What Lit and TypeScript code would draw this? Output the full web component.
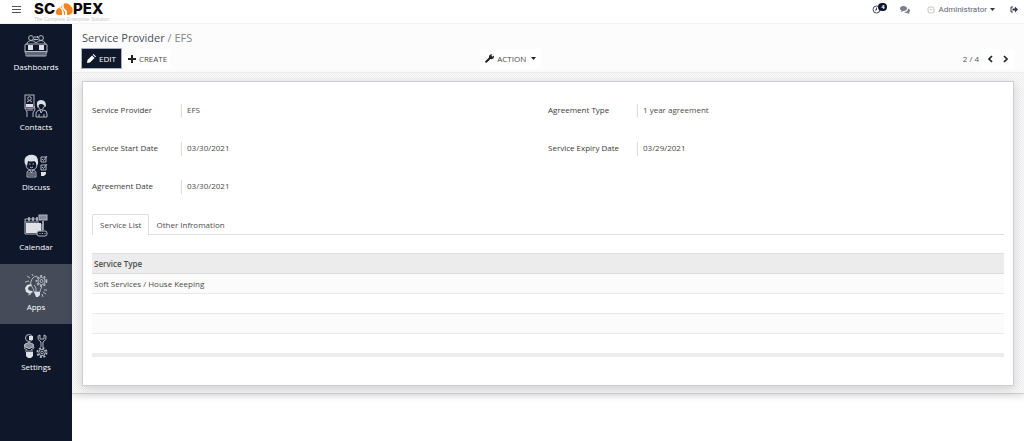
import { LitElement, html, css, svg, nothing } from "lit";
import { customElement, property, state } from "lit/decorators.js";
import { classMap } from "lit/directives/class-map.js";

const gear = (cx: number, cy: number, r: number) => svg`
  <circle cx=${cx} cy=${cy} r=${r} />
  <circle cx=${cx} cy=${cy} r=${r + 1.4} stroke-dasharray="2 1.6" stroke-width="1.8" />
  <circle cx=${cx} cy=${cy} r=${r / 2.4} />`;

const menuIcons: Record<string, unknown> = {
  dashboards: svg`
    <circle cx="7" cy="4" r="2.4" /><circle cx="17" cy="4" r="2.4" />
    <path d="M10 3h4M13 2l1 1-1 1M14 5.500h-4M11 4.500l-1 1 1 1M3 11V9q1-2 4-2.500 3 0 5 2.500 2-2.500 5-2.500t4 2.500v2" />
    <rect x="1" y="10" width="22" height="9" rx="1" />
    <path class="solid" d="M4 11h5v5H4zM15 11h5v5h-5z" />
    <path d="M1 17.500h22M2 19v3h20v-3M3 21h18" />`,
  contacts: svg`
    <rect x="1" y="1" width="9" height="13" /><circle cx="5.500" cy="4.500" r="1.800" />
    <path d="M3 8q2.500-3 5 0" />
    <path class="solid" d="M2 10h7v3H2z" />
    <path d="M1 14l2 4v5M10 12l1 3-2 4v4M4 14v3M6 14v3M8 14v3" />
    <path class="solid" d="M13 12q-1-6 4-6t5 6l-1 1q-1-3-4-3t-3 4z" />
    <path d="M14 11q1 5 3 5t4-5M12 23v-4q1-3 4-3l1 3 2-3q4 0 4 4v3zM15 20v3M20 20v3" />`,
  discuss: svg`
    <path class="solid" d="M1 10Q-1 3 5 1q10-2 9 9l-2 2q1-4-2-5-3 1-6 0l-1 5z" />
    <path d="M2 10q0 6 5.500 6t5.500-6M5 10h1.500M8.500 10H10M6 13q1.500 1.500 3 0M3 23v-3q-1-3 3-4l1.500 3L9 16q4 1 3 4v3zM4 19h7M4 21h7" />
    <path d="M17 3h5v5h-5zM17 11h5v5h-5zM18 5l1.500 1.500L23 2M18 13l1.500 1.500L23 10" />
    <path class="solid" d="M17 18h5v2l-2 2h-3z" />`,
  calendar: svg`
    <path d="M1 20V5h13M18 10v10H1M1 8h14" />
    <path class="solid" d="M2 9h15v10H2z" />
    <path d="M5 3v4M9 3v4M13 3v4M19 7v9" stroke-width="1.600" />
    <rect x="15" y="1" width="8" height="5" class="soft" />
    <rect x="13" y="17" width="10" height="5" rx="2" class="ground" />
    <path d="M15.500 19.500h1M18 19.500h1M20.500 19.500h1" />`,
  apps: svg`
    <path class="solid" d="M7 10l-4 1-2 3 1 4 4 2 3-2-1-1q-4 0-4-3 1-2 3-2z" />
    <path d="M10 18q0-3-2-5-3-4 0-8 2-3 5-3M10 18h6q0-3 2-5M10 11l2 3v4M5 7L1 8M6 4L3 2M9 2L8 0M19 18l3 2M18 20l1 3M4 21l3-1M20 16h3" />
    ${gear(17.5, 7, 3.600)}
    <path class="solid" d="M10 18h6v3l-2 2h-2z" />`,
  settings: svg`
    <circle cx="5" cy="4" r="3.500" /><path class="solid" d="M5 2h4v4H5z" />
    <path class="soft" d="M1 10q4-3 8 0v3q-4 3-8 0z" />
    <path d="M1 10l-1 4 3 2M9 10l1 4-3 2M1 17h8" />
    <path class="solid" d="M2 18h7v4l-2 2H4l-2-2z" />
    <path d="M17 13V8q-4-2-3-6l2-1v4h4V1l2 1q1 4-3 6v5" />
    ${gear(18, 18.5, 3.200)}`,
};

const menu = ["Dashboards", "Contacts", "Discuss", "Calendar", "Apps", "Settings"];

@customElement("side-menu")
class SideMenu extends LitElement {
  @property() active = "Apps";

  static styles = css`
    :host { display: block; background: #0f172b; flex: none; width: 72px; }
    .item {
      display: flex; flex-direction: column; align-items: center; gap: 3px;
      box-sizing: border-box; height: 60px; padding-top: 10px;
      color: #fff; text-decoration: none; font-size: 8px; line-height: 12px; font-weight: 500;
    }
    .item.active { background: #454b59; }
    .icon { width: 24px; height: 24px; fill: none; stroke: #b4b8c1; stroke-width: 1; }
    .solid { fill: #dfe1e6; stroke: none; }
    .soft { fill: #858a96; }
    .ground { fill: #0f172b; }
  `;

  render() {
    return html`<nav aria-label="Applications">
      ${menu.map((name) => html`
        <a href="#${name.toLowerCase()}" class=${classMap({ item: true, active: name === this.active })}>
          <svg class="icon" viewBox="0 0 24 24" aria-hidden="true">${menuIcons[name.toLowerCase()]}</svg>
          <span>${name}</span>
        </a>`)}
    </nav>`;
  }
}

@customElement("top-bar")
class TopBar extends LitElement {
  static styles = css`
    :host {
      display: flex; align-items: center; justify-content: space-between;
      box-sizing: border-box; height: 24px; padding: 0 6px 0 8px; background: #fff;
      border-bottom: 1px solid #f3f3f3;
    }
    .left, .right { display: flex; align-items: center; }
    .left { gap: 9px; }
    .right { gap: 11px; height: 19px; align-self: flex-start; }
    button {
      display: flex; align-items: center; padding: 0; border: 0; background: none;
      color: #6c7280; font: inherit; cursor: pointer;
    }
    .burger { width: 17px; height: 16px; justify-content: center; align-self: flex-start; margin-top: 1px; }
    .brand { display: block; text-decoration: none; align-self: flex-start; }
    .word { display: flex; align-items: center; height: 15px; color: #080808; font: 800 15px/15px "Inter", sans-serif; }
    .tag { display: block; color: #c9c9c9; font: 5px/6px "Liberation Sans", sans-serif; white-space: nowrap; }
    .activity { position: relative; }
    .count {
      position: absolute; left: 6px; top: -2px; width: 9px; height: 8px; border-radius: 4px;
      background: #0f172b; color: #fff; font: 700 6px/8px "Roboto", sans-serif; text-align: center;
    }
    .chat { margin-left: 8px; }
    .user { gap: 3px; margin: 0 4px 0 6px; font: 8px/12px "Roboto", sans-serif; color: #5d6472; }
  `;

  render() {
    return html`
      <div class="left">
        <button class="burger" aria-label="Toggle menu">
          <svg width="9" height="8" viewBox="0 0 9 8" stroke="#555" stroke-width="1"><path d="M0 .5h9M0 3.500h9M0 6.500h9" /></svg>
        </button>
        <a class="brand" href="#home">
          <span class="word">SC<svg width="18" height="12" viewBox="0 0 18 12" aria-label="O">
            <path fill="#f58220" d="M8 1q4-2 7 1 4 4 2 8-1 2-4 2H3Q0 11 1 8q1-3 5-4z" />
            <path fill="#fff" d="M8 1q-2 3 0 5l2 3 0 3h2V8L9 5Q8 3 9 1zM5 5q3 3 2 7h2Q9 7 6 4z" />
          </svg>PEX</span>
          <span class="tag">The Complete Enterprise Solution</span>
        </a>
      </div>
      <div class="right">
        <button class="activity" aria-label="Activities">
          <svg width="9" height="9" viewBox="0 0 9 9" fill="none" stroke="#444b5a" stroke-width="1"><circle cx="4.500" cy="4.500" r="3.500" /><path d="M4.500 2.500v2.500H3" /></svg>
          <span class="count">4</span>
        </button>
        <button class="chat" aria-label="Messages">
          <svg width="10" height="8" viewBox="0 0 10 8" fill="#7b808c"><path d="M3.500 0C5.500 0 7 1 7 2.500S5.500 5 3.500 5L1 6l.5-1.500Q0 4 0 2.500 0 0 3.500 0z" /><path d="M8 2.500q2 .5 2 2Q10 6 9 6.500L9.500 8 7 7Q5 7 4 6q4 0 4-3.500z" /></svg>
        </button>
        <button class="user">
          <svg width="8" height="8" viewBox="0 0 8 8" fill="none" stroke="#c6c6c6" stroke-width="1"><path d="M1 2l2-1h3l1 2v3L5 7H2L1 5z" /><path d="M3 4l1-1 1 1" /></svg>
          <span>Administrator</span>
          <svg width="5" height="3" viewBox="0 0 5 3"><path fill="#30384a" d="M0 0h5L2.500 3z" /></svg>
        </button>
        <button aria-label="Log out">
          <svg width="8" height="7" viewBox="0 0 8 7"><path d="M3 1H1v5h2" fill="none" stroke="#30384a" /><path fill="#30384a" d="M2.500 2.500H5V.5l3 3-3 3v-2H2.500z" /></svg>
        </button>
      </div>`;
  }
}

@customElement("control-panel")
class ControlPanel extends LitElement {
  static styles = css`
    :host { display: block; background: #fcfcfc; border-bottom: 1px solid #f0f0f0; padding: 7px 10px 4px; }
    .crumbs { font-size: 11px; line-height: 14px; color: #82868c; }
    .crumbs a { color: #4a4f59; text-decoration: none; }
    .bar { display: grid; grid-template-columns: 16fr auto 19fr; align-items: center; margin-top: 4px; }
    .group { display: flex; align-items: center; gap: 3px; }
    .end { justify-content: flex-end; }
    .pager { display: flex; }
    button {
      display: flex; align-items: center; gap: 3px; box-sizing: border-box; height: 19px;
      padding: 0 4px; border: 0; background: #fff; color: #4b4b4b; font: 8px/12px "Open Sans", sans-serif; cursor: pointer;
    }
    .primary { background: #0f172b; color: #fff; font-weight: 500; padding: 0 5px; outline: 1px solid #aab0c4; }
    .action { padding: 0 5px; }
    .caret { margin-left: 2px; }
    .step { width: 16px; padding: 0; justify-content: center; }
    .count { font-size: 8px; line-height: 12px; color: #555; }
  `;

  render() {
    return html`
      <div class="crumbs"><a href="#providers">Service Provider</a> / EFS</div>
      <div class="bar">
        <div class="group">
          <button class="primary">
            <svg width="9" height="9" viewBox="0 0 9 9" fill="#fff"><path d="M0 9l.5-3L5 1.500 7.500 4 3 8.500zM5.700.8L6.500 0 9 2.500l-.8.8z" /></svg>EDIT
          </button>
          <button>
            <svg width="8" height="8" viewBox="0 0 8 8"><path d="M4 0v8M0 4h8" stroke="#222" stroke-width="2" /></svg>CREATE
          </button>
        </div>
        <button class="action">
          <svg width="9" height="9" viewBox="0 0 9 9"><path d="M1.200 7.800L5.500 3.500" stroke="#222" stroke-width="2" stroke-linecap="round" /><path fill="#222" d="M7.500.3L6.300 1.700l1 1L8.800 1.500Q9.500 4 7.500 5 5 5.500 4 4 3.500 0 7.500.3z" /></svg>ACTION
          <svg class="caret" width="5" height="3" viewBox="0 0 5 3"><path fill="#222" d="M0 0h5L2.500 3z" /></svg>
        </button>
        <div class="group end">
          <span class="count">2 / 4</span>
          <div class="pager">
            <button class="step" aria-label="Previous"><svg width="6" height="8" viewBox="0 0 6 8"><path d="M5 1L2 4l3 3" fill="none" stroke="#222" stroke-width="1.700" /></svg></button>
            <button class="step" aria-label="Next"><svg width="6" height="8" viewBox="0 0 6 8"><path d="M1 1l3 3-3 3" fill="none" stroke="#222" stroke-width="1.700" /></svg></button>
          </div>
        </div>
      </div>`;
  }
}

const fields: [string, string][] = [
  ["Service Provider", "EFS"],
  ["Agreement Type", "1 year agreement"],
  ["Service Start Date", "03/30/2021"],
  ["Service Expiry Date", "03/29/2021"],
  ["Agreement Date", "03/30/2021"],
];

@customElement("record-sheet")
class RecordSheet extends LitElement {
  @state() tab = 0;

  static styles = css`
    :host {
      display: block; padding: 8px 10px 7px;
      background: repeating-conic-gradient(#f0f0f0 0 25%, #f8f8f8 0 50%) 0 0 / 2px 2px;
      border-bottom: 1px solid #cfcfd0; box-shadow: 0 3px 6px #0000001f;
    }
    .sheet {
      background: #fff; border: 1px solid #cdced6; padding: 22px 9px 28px;
      box-shadow: 0 3px 10px #00000026; color: #4c4c4c; font-size: 8px; line-height: 12px;
    }
    .fields { display: grid; grid-template-columns: 1fr 1fr; row-gap: 24px; margin: 0; }
    .field { display: grid; grid-template-columns: 89px 1fr; }
    dt { font-weight: 500; color: #3a3a3a; }
    dd { margin: 0; border-left: 1px solid #dcdcdc; padding: 0 5px 2px; }
    .tabs { display: flex; margin-top: 20px; border-bottom: 1px solid #dedfe3; }
    .tab {
      border: 1px solid transparent; border-bottom: 0; margin-bottom: -1px; background: none; padding: 4px 7px;
      color: #4c4c4c; font: inherit; cursor: pointer;
    }
    .tab + .tab { padding-left: 6px; }
    .tab.on { background: #fff; border-color: #dedfe3; border-radius: 2px 2px 0 0; }
    table { width: 100%; border-collapse: collapse; margin-top: 18px; }
    th, td { box-sizing: border-box; padding: 0 2px; text-align: left; }
    th { height: 20px; background: #ececec; font-weight: 600; border-top: 1px solid #dfdfdf; border-bottom: 1px solid #d8dbe0; }
    td { height: 20px; border-bottom: 1px solid #e8e8ea; }
    tbody tr:nth-child(odd) td { background: #fbfbfb; }
    tbody tr:last-child td { height: 19px; border-bottom: 0; background: #fff; }
    tfoot td { height: 4px; background: #ececec; border: 0; }
  `;

  render() {
    return html`<section class="sheet">
      <dl class="fields">
        ${fields.map(([label, value]) => html`<div class="field"><dt>${label}</dt><dd>${value}</dd></div>`)}
      </dl>
      <div class="tabs" role="tablist">
        ${["Service List", "Other Infromation"].map((label, i) => html`
          <button role="tab" aria-selected=${i === this.tab} class=${classMap({ tab: true, on: i === this.tab })}
            @click=${() => (this.tab = i)}>${label}</button>`)}
      </div>
      ${this.tab === 0 ? html`<table>
        <thead><tr><th scope="col">Service Type</th></tr></thead>
        <tbody>
          <tr><td>Soft Services / House Keeping</td></tr>
          <tr><td></td></tr>
          <tr><td></td></tr>
          <tr><td></td></tr>
        </tbody>
        <tfoot><tr><td></td></tr></tfoot>
      </table>` : nothing}
    </section>`;
  }
}

@customElement("app-root")
class AppRoot extends LitElement {
  static styles = css`
    :host { display: flex; flex-direction: column; min-height: 100vh; background: #fff; font-family: "Open Sans", sans-serif; }
    .body { display: flex; flex: 1; }
    .main { flex: 1; min-width: 0; }
  `;

  render() {
    return html`
      <top-bar></top-bar>
      <div class="body">
        <side-menu active="Apps"></side-menu>
        <main class="main">
          <control-panel></control-panel>
          <record-sheet></record-sheet>
        </main>
      </div>`;
  }
}
